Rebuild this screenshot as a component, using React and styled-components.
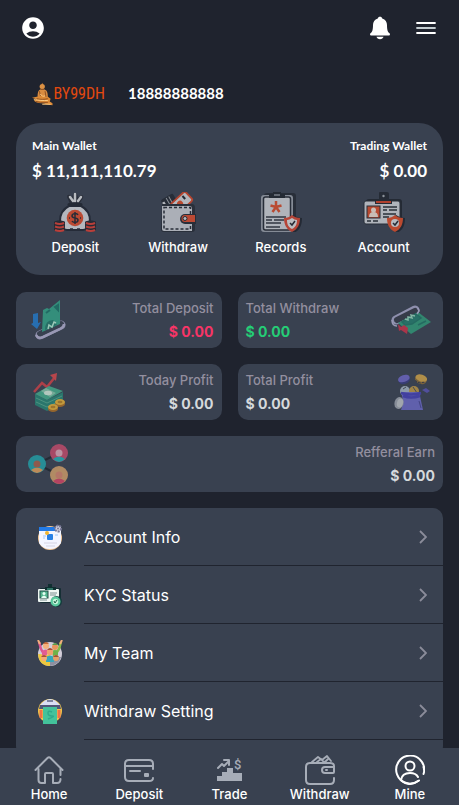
import React from 'react'
import styled, { createGlobalStyle } from 'styled-components'
import { MdAccountCircle } from 'react-icons/md'

const GlobalStyle = createGlobalStyle`
    :root {
        --page: #1f232e;
        --panel: #394150;
        --muted: #938f9f;
        --line: #20242f;
        --icon: #a7adb8;
    }

    * { box-sizing: border-box; }

    body {
        margin: 0;
        background-color: var(--page);
        color: #fff;
        font-family: Inter, 'Liberation Sans', sans-serif;
    }

    a { color: inherit; text-decoration: none; }
    button { border: 0; padding: 0; background: none; color: inherit; font: inherit; cursor: pointer; }
    svg { display: block; }
`

/* ---------- drawings ---------- */

const BellIcon = () => (
  <svg width="24" height="24" viewBox="0 0 24 24" fill="#fff" aria-hidden="true">
    <path d="M12 .7c-1.200 0-2 .7-2.200 1.700C6.500 3.300 5 6 5 9c0 5-.8 7.300-2.500 8.200C1.700 17.800 1.900 19.400 3 19.400h18c1.100 0 1.300-1.600.5-2.200C19.800 16.300 19 14 19 9c0-3-1.500-5.700-4.800-6.600C14 1.400 13.200.7 12 .7z" />
    <path d="M8.500 20.800h7c-.4 1.600-1.700 2.500-3.500 2.500s-3.100-.9-3.500-2.500z" />
  </svg>
)

const MenuIcon = () => (
  <svg width="24" height="24" viewBox="0 0 24 24" aria-hidden="true">
    <path d="M3 7h18M3 17h18" stroke="#fff" strokeWidth="1.800" strokeLinecap="round" />
    <path d="M3 12h18" stroke="#c3ccd0" strokeWidth="1.800" strokeLinecap="round" />
  </svg>
)

const BuddhaIcon = () => (
  <svg width="23" height="24" viewBox="0 0 23 24" aria-hidden="true">
    <path d="M6 15c0-5 1-7 3-8h4c3 1 4 3 4 9l1 2-6 2-8-1z" fill="#d98c40" />
    <path d="M0 16l5-1 6-1 6 1 3 2-1 3 3 2v2c-5 0-8-2-12-2-4 0-6-1-8-3l3-1z" fill="#dc8a36" />
    <path d="M10 2l1-2 1 2z" fill="#c57a32" />
    <circle cx="11" cy="4" r="2.800" fill="#dc9144" />
    <path d="M8 9l1 5M14 9l1 6M5 17c4 1 8 1 12 0M4 20l5 1 8 0" stroke="#8b4d20" strokeWidth="1" fill="none" />
    <path d="M9 12c1 2 3 3 5 2M2 18c5 1 10 1 15 1M11 23l9 0" stroke="#ffcf86" strokeWidth="1" fill="none" />
    <path d="M9 7h4" stroke="#8b4d20" strokeWidth="1" />
  </svg>
)

const BagIcon = () => (
  <svg width="42" height="40" viewBox="0 0 42 40" aria-hidden="true">
    <path d="M15 14h12c6 3 9 9 9 15 0 5-3 9-7 9H13c-4 0-7-4-7-9 0-6 3-12 9-15z" fill="#b4b7be" stroke="#252b38" strokeWidth="2" />
    <path d="M17 14L13 5q0-3 3-2l2 3 1-4q2-3 4 0l1 4 3-3q3 0 2 3l-5 8z" fill="#292e39" />
    <path d="M16 5l3 4M21 2v7M27 5l-3 4" stroke="#b9bcc1" strokeWidth="2.500" strokeLinecap="round" />
    <path d="M15 12.500h12" stroke="#242a35" strokeWidth="3" strokeLinecap="round" />
    <circle cx="21" cy="26" r="8.300" fill="#bb4a33" />
    <path d="M24 23c-1-2-6-2-6 1 0 3 6 1 6 4s-5 3-6 1M21 20v12" stroke="#272c37" strokeWidth="1.500" fill="none" />
    <path d="M15 26h1M26 26h1M16 37h3M23 37h3" stroke="#272c37" strokeWidth="1.500" />
    {[0, 31].map((x) => (
      <g key={x} transform={`translate(${x} 0)`}>
        <path d="M0 30c1-2 10-2 11 0v8c-2 2-9 2-11 0z" fill="#262b36" />
        <path d="M1 31q5 2 9 0M1 34.500q5 2 9 0M1 38q5 2 9 0" stroke="#b93f3a" strokeWidth="2" fill="none" />
      </g>
    ))}
  </svg>
)

const PurseIcon = () => (
  <svg width="38" height="40" viewBox="0 0 38 40" aria-hidden="true">
    <g transform="rotate(-30 10 9)">
      <rect x="3" y="4" width="14" height="15" rx="2" fill="#272d38" />
      <path d="M4.500 7v9" stroke="#b4b7bd" strokeWidth="2.500" />
      <path d="M9 5v10M12 5v10" stroke="#8b9098" strokeWidth="1" />
    </g>
    <g transform="rotate(47 24 9)">
      <rect x="18" y="1" width="12" height="20" rx="2" fill="#b4b7bd" stroke="#b5442f" strokeWidth="1.800" />
      <circle cx="24" cy="13" r="3" fill="#b9492f" />
      <path d="M20 6h4" stroke="#252a35" strokeWidth="2" />
    </g>
    <path d="M3 12h30q3 0 3 4v21q0 3-3 3H5q-3 0-3-3z" fill="#292f3a" />
    <path d="M3 14h28q2 0 2 3v22H5q-2 0-2-2z" fill="#abafb7" />
    <path d="M5 15.500h26.500v21.500H5z" fill="none" stroke="#282e39" strokeWidth="1.500" strokeDasharray="3 2" />
    <path d="M26 22h11v10H26a5 5 0 010-10z" fill="#282e39" />
    <path d="M26 23h10v7H26a3.500 3.500 0 010-7z" fill="#bb4933" />
    <circle cx="26" cy="26.500" r="2" fill="#b7babf" stroke="#272d38" />
  </svg>
)

const Shield = ({ x, y, color, inner }) => (
  <g transform={`translate(${x} ${y})`}>
    <path d="M1-8c3 2 6 3 9 3 0 7-2 12-8 15-4-2-8-6-8-12z" fill="#242a35" />
    <path d="M0-8c2 2 5 3 8 3 0 6-2 11-8 14-6-3-8-8-8-14 3 0 6-1 8-3z" fill={color} />
    <path d="M0-5c2 1 3 2 5 2 0 4-1 7-5 9-4-2-5-5-5-9 2 0 3-1 5-2z" fill={inner} />
    <path d="M-2 0l2 2 3-4" stroke="#252a35" strokeWidth="1.500" fill="none" />
  </g>
)

const RecordsIcon = () => (
  <svg width="42" height="40" viewBox="0 0 42 40" aria-hidden="true">
    <rect x="4" y="1" width="32" height="37" rx="3" fill="#282e39" />
    <rect x="1" y="3" width="32" height="37" rx="3" fill="#858b96" />
    <rect x="3.500" y="5" width="27" height="33" rx="2" fill="#b0b4bb" stroke="#282e39" strokeWidth="1.500" />
    <path d="M9 6V2h4V0h8v2h4v4z" fill="#242a34" />
    <path d="M14 3h6" stroke="#777e87" strokeWidth="1.500" />
    <path d="M16 9v6M10.500 13.500L16 15l5.500-1.500M12.500 20L16 15l3.500 5" stroke="#b94b32" strokeWidth="2.500" fill="none" />
    <path d="M6 25h20M6 28h6m2 0h10M6 31h15M6 35h14" stroke="#303641" strokeWidth="1.300" />
    <Shield x={32} y={31} color="#b64538" inner="#bcbec2" />
  </svg>
)

const BadgeIcon = () => (
  <svg width="42" height="40" viewBox="0 0 42 40" aria-hidden="true">
    <rect x="3" y="7" width="36" height="25" rx="3" fill="#242a34" />
    <rect x="1" y="9" width="36" height="23" rx="2" fill="#b0b4bb" stroke="#292f39" />
    <path d="M12 12V8h4V1q0-1 1-1h7q2 0 2 2v6h3v4z" fill="#252b35" />
    <path d="M13 10h15" stroke="#b1412f" strokeWidth="2" />
    <circle cx="20.500" cy="4" r="1.200" fill="#8c929b" />
    <rect x="4" y="14" width="13" height="12" fill="#b84a31" stroke="#292f39" />
    <circle cx="10.500" cy="18" r="2.500" fill="#c9bdb6" />
    <path d="M6 25q0-5 4.500-5t4.500 5z" fill="#c9bdb6" />
    <path d="M4 29h4m2 0h5M20 15h14M20 18h4m2 0h8M20 22h13M20 25h6" stroke="#292f39" strokeWidth="1.500" />
    <Shield x={32} y={31} color="#bb4a30" inner="#bb4a30" />
    <circle cx="32" cy="31" r="4" fill="#b8bbc0" />
    <path d="M30 31l2 2 3-4" stroke="#252a35" strokeWidth="1.500" fill="none" />
  </svg>
)

const TotalDepositIcon = () => (
  <svg width="40" height="40" viewBox="0 0 40 40" aria-hidden="true">
    <path d="M5 14l5-1v10l3-1-4 7-6-5 2-1z" fill="#276eb0" />
    <path d="M12 35L33 25" stroke="#8b8ca9" strokeWidth="9" strokeLinecap="round" />
    <path d="M12 34L33 24" stroke="#394150" strokeWidth="6" strokeLinecap="round" />
    <path d="M15 10l4-2 2 1 11-9v24L14 32z" fill="#348e7b" />
    <path d="M18 13l4-3M27 7l3-2v5z" stroke="#216a63" strokeWidth="2" fill="#28786e" />
    <path d="M17 30q0-10 8-10l4 5z" fill="#276f66" />
    <path d="M20 29l1-4 3 2 2-5 2 1" stroke="#9bc9b8" strokeWidth="1.500" fill="none" />
    <path d="M8 35q2 4 7 2l17-8q4-2 4-5" stroke="#9998b4" strokeWidth="2.500" fill="none" />
  </svg>
)

const TotalWithdrawIcon = () => (
  <svg width="40" height="40" viewBox="0 0 40 40" aria-hidden="true">
    <path d="M5 20L24 10" stroke="#8e8fad" strokeWidth="9" strokeLinecap="round" />
    <path d="M6 20L24 11" stroke="#363b49" strokeWidth="6" strokeLinecap="round" />
    <path d="M7 23l20-11 13 10-20 12z" fill="#32866f" />
    <path d="M11 22l14-8 5 4-9 6-7 1zM27 25l8-4" stroke="#256a61" strokeWidth="1.500" fill="#286f66" />
    <path d="M14 19l3 1 0-3 4 1-1-3 4 1" stroke="#83b5a4" strokeWidth="1.500" fill="none" />
    <path d="M1 20q0 6 5 6M27 8l1 3-2 3" stroke="#9999b5" strokeWidth="1.500" fill="none" />
    <path d="M7 24l1 7 2-1 6 4 1-6-4-3-3 2z" fill="#a9354a" />
  </svg>
)

const TodayProfitIcon = () => (
  <svg width="40" height="40" viewBox="0 0 40 40" aria-hidden="true">
    <path d="M6 20l8-9 5 4 8-10" stroke="#ad4149" strokeWidth="2.500" fill="none" />
    <path d="M22 3l7-2-1 8z" fill="#b8464b" />
    <path d="M7 22l12 6 16-8v11l-16 8-12-6z" fill="#2a766c" />
    <path d="M7 22l14-8 14 5-16 9z" fill="#42967f" />
    <path d="M13 19l5-3 10 5-6 4z" fill="#75aa98" />
    <ellipse cx="20" cy="21" rx="4" ry="2.200" fill="#b2c7bd" />
    <path d="M8 26l11 5 15-7M8 30l11 5 15-7" stroke="#4d9280" strokeWidth="1" fill="none" />
    {[[32, 30], [25, 35]].map(([x, y]) => (
      <g key={x}>
        <ellipse cx={x} cy={y + 2} rx="5" ry="3" fill="#95662d" />
        <ellipse cx={x} cy={y} rx="5" ry="3" fill="#c39a3c" />
        <ellipse cx={x} cy={y} rx="2.500" ry="1.300" fill="#9c752e" />
      </g>
    ))}
  </svg>
)

const TotalProfitIcon = () => (
  <svg width="40" height="40" viewBox="0 0 40 40" aria-hidden="true">
    <g transform="rotate(-18 13 7)">
      <ellipse cx="13" cy="8" rx="6" ry="4" fill="#383d75" />
      <ellipse cx="13" cy="6.500" rx="6" ry="3.500" fill="#625eab" />
    </g>
    <g transform="rotate(18 30 7)">
      <ellipse cx="30" cy="8" rx="6" ry="4" fill="#77623d" />
      <ellipse cx="30" cy="6" rx="6" ry="3.500" fill="#b08e49" />
      <path d="M25 10l2 1M28 11h3M32 10l2-1" stroke="#373c49" />
    </g>
    <circle cx="14" cy="19" r="5" fill="#8d9aaa" />
    <circle cx="23" cy="19" r="5" fill="#a08447" />
    <path d="M22 15l4 6M12 17l3-2" stroke="#464b54" />
    <path d="M10 20h20l-1 4 3 14H10q3-8 1-14z" fill="#6060ac" />
    <path d="M10 21q10 3 20 0M12 24q8 3 17 0" stroke="#4240a0" strokeWidth="2.500" fill="none" />
    <path d="M28 29l2 7" stroke="#434584" />
    <ellipse cx="8" cy="31" rx="4.500" ry="6" fill="#878d98" transform="rotate(15 8 31)" />
    <ellipse cx="9" cy="31" rx="3" ry="4.500" fill="#a1a6ad" transform="rotate(15 9 31)" />
    <path d="M31 18l4-2 4 3-3 2z" fill="#514f9c" />
  </svg>
)

const ReferralIcon = () => (
  <svg width="40" height="40" viewBox="0 0 40 40" aria-hidden="true">
    <path d="M31 9L9 20l22 11" stroke="#242b35" strokeWidth="2" fill="none" />
    <circle cx="9" cy="20" r="9" fill="#278d96" />
    <circle cx="31" cy="9" r="9" fill="#a84966" />
    <circle cx="31" cy="31" r="9" fill="#b18b64" />
    <path d="M3 26q6-5 12 0-6 6-12 0z" fill="#bd8b59" />
    <circle cx="9" cy="20" r="3.500" fill="#8f5a4d" />
    <path d="M25 15q6-5 12 0-6 6-12 0z" fill="#2898a0" />
    <circle cx="31" cy="9" r="3.500" fill="#bc92a2" />
    <path d="M25 37q6-5 12 0-6 6-12 0z" fill="#b44362" />
    <circle cx="31" cy="31" r="3.500" fill="#b47767" />
  </svg>
)

const AccountInfoIcon = () => (
  <svg width="26" height="26" viewBox="0 0 26 26" aria-hidden="true">
    <circle cx="13" cy="14" r="12" fill="#f4c898" />
    <path d="M2 6h22v13q-4 6-11 6T2 19z" fill="#f3f5ff" />
    <path d="M2 3h20v4H2z" fill="#237be6" />
    <path d="M6 12h3M18 11h3M6 14h2" stroke="#9cc7fa" />
    <rect x="10" y="10" width="6" height="6" rx="1" fill="#267fe5" />
    <circle cx="10" cy="9" r="2" fill="#f0b632" />
    <path d="M7 19h13M9 22h9" stroke="#d5d3e2" strokeWidth="1" />
    <circle cx="21" cy="4.500" r="3" fill="#d0d0de" stroke="#777795" strokeWidth="2" strokeDasharray="2 1" />
    <circle cx="21" cy="4.500" r="1" fill="#777795" />
  </svg>
)

const KycIcon = () => (
  <svg width="26" height="26" viewBox="0 0 26 26" aria-hidden="true">
    <rect x="3" y="6" width="21" height="15" rx="1" fill="#172f35" />
    <rect x="1" y="7" width="21" height="13" rx="1" fill="#eef6f2" />
    <path d="M8 8V5h3V2h4v3h4v3z" fill="#102f31" />
    <path d="M10 7h6" stroke="#51b998" />
    <rect x="3" y="9" width="8" height="7" fill="#53b58e" stroke="#214d47" />
    <circle cx="7" cy="11.500" r="1.500" fill="#e6fff3" />
    <path d="M4 16q3-5 6 0z" fill="#e6fff3" />
    <path d="M3 18h7M13 11h7M13 13h6" stroke="#7f9092" />
    <circle cx="19.500" cy="19.500" r="5.500" fill="#143b3c" />
    <circle cx="18.500" cy="19.500" r="5" fill="#5ac99d" />
    <circle cx="18.500" cy="19.500" r="2.700" fill="#c5f4da" />
    <path d="M17 19l1 2 2-3" stroke="#206149" fill="none" />
  </svg>
)

const TeamIcon = () => (
  <svg width="26" height="26" viewBox="0 0 26 26" aria-hidden="true">
    <circle cx="13" cy="14" r="12" fill="#d2cdd9" />
    <path d="M1 14q1 12 12 12V15z" fill="#edc83d" />
    <path d="M13 17h11q-2 8-11 9z" fill="#8d8fa0" />
    <path d="M2 2l2 7 4 7" stroke="#dc5592" strokeWidth="2.500" fill="none" />
    <path d="M24 2l-2 7-4 6" stroke="#85b946" strokeWidth="2.500" fill="none" />
    <path d="M1 0l2 4M25 0l-2 4" stroke="#f2ae7c" strokeWidth="2" />
    <circle cx="9" cy="6" r="3" fill="#f3b17c" />
    <path d="M6 4q3-4 6 0z" fill="#c96c3a" />
    <circle cx="18" cy="7" r="3" fill="#e8955c" />
    <path d="M15 5q3-4 6 0z" fill="#5c9a49" />
    <path d="M5 11q4-3 7 0l-3 5H5z" fill="#e25c93" />
    <path d="M15 11q3-2 6 0v6h-5z" fill="#6eb249" />
    <circle cx="13" cy="12" r="3.200" fill="#f0a26f" />
    <path d="M10 10q3-4 6 0z" fill="#a94c32" />
    <path d="M9 17q4-3 8 0v5H9z" fill="#37a7ba" />
    <circle cx="7" cy="18" r="3" fill="#f5ab76" />
    <circle cx="19" cy="18" r="3" fill="#e6a069" />
    <path d="M4 17q3-4 6 0zM16 17q3-4 6 0z" fill="#a65338" />
  </svg>
)

const WithdrawSettingIcon = () => (
  <svg width="26" height="26" viewBox="0 0 26 26" aria-hidden="true">
    <circle cx="13" cy="13" r="12" fill="#f1c64a" />
    <path d="M3 7Q13-5 23 7v3H3z" fill="#d9dff4" />
    <path d="M10 3h6" stroke="#5e6684" strokeWidth="1.500" />
    <path d="M3 7h20l1 4H2z" fill="#515778" />
    <path d="M4 12v8M22 12v8" stroke="#ef7048" strokeWidth="3" />
    <path d="M6 9h14v17H6z" fill="#43c29b" />
    <path d="M15 14q-4-2-4 1t4 3-4 3" stroke="#2fa98b" strokeWidth="1.500" fill="none" />
  </svg>
)

const ChevronIcon = () => (
  <svg width="8" height="14" viewBox="0 0 8 14" fill="none" aria-hidden="true">
    <path d="M1 1l6 6-6 6" stroke="#8b8c9a" strokeWidth="1.800" />
  </svg>
)

const HomeIcon = () => (
  <>
    <path d="M1.500 15L13.500 3q1.500-1.500 3 0l12 12" />
    <path d="M4.500 14v11q0 3 3 3H11v-9q0-1 1-1h6q1 0 1 1v9h4q3.500 0 3.500-4M26.500 14v6" />
  </>
)

const CardIcon = () => (
  <>
    <path d="M29 14V9q0-4-4-4H5Q1 5 1 9v13q0 4 4 4h20q4 0 4-3M1 11h28M6 16h10" />
    <rect x="21" y="19" width="3" height="2" />
  </>
)

const TradeIcon = () => (
  <>
    <path d="M3 26v-5h5v-4h5v-4h6v5h9v8z" fill="currentColor" stroke="none" />
    <path d="M4 13l4-4 2 2 5-5M10 5h5v5" strokeWidth="2" />
    <text x="20" y="14" fontFamily="Roboto" fontSize="13" fill="currentColor" stroke="none">$</text>
  </>
)

const WalletIcon = () => (
  <>
    <path d="M29 12v-1q0-3-4-3H5Q1 8 1 12v13q0 4 4 4h20q4 0 4-4v-2" />
    <path d="M28 12h-8q-3 0-3 3t3 3h8q1 0 1-1v-4q0-1-1-1zM21 15h1" />
    <path d="M7 7l6-5 4 3 5-4 4 5M12 7l4-3 3 3M20 7l3-3" strokeWidth="1.800" />
  </>
)

const MineIcon = () => (
  <>
    <path d="M28.500 19A14 14 0 1 0 24 25.500M29 15q0-2-.5-3" />
    <circle cx="15" cy="11" r="4.500" />
    <path d="M6 25q1-7 9-7 6 0 8 4M7 26q7 6 16 0" />
  </>
)

/* ---------- data ---------- */

const actions = [
  { label: 'Deposit', icon: <BagIcon /> },
  { label: 'Withdraw', icon: <PurseIcon /> },
  { label: 'Records', icon: <RecordsIcon /> },
  { label: 'Account', icon: <BadgeIcon /> },
]

const stats = [
  { label: 'Total Deposit', icon: <TotalDepositIcon />, color: '#f73567' },
  { label: 'Total Withdraw', icon: <TotalWithdrawIcon />, color: '#25cd76', flip: true },
  { label: 'Today Profit', icon: <TodayProfitIcon /> },
  { label: 'Total Profit', icon: <TotalProfitIcon />, flip: true },
  { label: 'Refferal Earn', icon: <ReferralIcon />, wide: true },
]

const settings = [
  { label: 'Account Info', icon: <AccountInfoIcon /> },
  { label: 'KYC Status', icon: <KycIcon /> },
  { label: 'My Team', icon: <TeamIcon /> },
  { label: 'Withdraw Setting', icon: <WithdrawSettingIcon /> },
]

const tabs = [
  { label: 'Home', icon: <HomeIcon /> },
  { label: 'Deposit', icon: <CardIcon /> },
  { label: 'Trade', icon: <TradeIcon /> },
  { label: 'Withdraw', icon: <WalletIcon /> },
  { label: 'Mine', icon: <MineIcon />, active: true },
]

const App = () => {
  return (
    <Screen>
      <GlobalStyle />
      <Content>
        <Header>
          <button type="button" aria-label="Profile"><MdAccountCircle size={26} /></button>
          <HeaderActions>
            <button type="button" aria-label="Notifications"><BellIcon /></button>
            <button type="button" aria-label="Menu"><MenuIcon /></button>
          </HeaderActions>
        </Header>

        <Profile>
          <Brand><BuddhaIcon /><BrandName>BY99DH</BrandName></Brand>
          <Phone>18888888888</Phone>
        </Profile>

        <WalletCard>
          <Balances>
            <Balance>
              <BalanceLabel>Main Wallet</BalanceLabel>
              <BalanceValue>$ 11,111,110.79</BalanceValue>
            </Balance>
            <Balance $right>
              <BalanceLabel>Trading Wallet</BalanceLabel>
              <BalanceValue>$ 0.00</BalanceValue>
            </Balance>
          </Balances>
          <Actions>
            {actions.map(({ label, icon }) => (
              <Action href="#" key={label}>{icon}{label}</Action>
            ))}
          </Actions>
        </WalletCard>

        <Stats>
          {stats.map(({ label, icon, color, flip, wide }) => (
            <Stat key={label} $flip={flip} $wide={wide}>
              {icon}
              <StatText $flip={flip}>
                <StatLabel>{label}</StatLabel>
                <StatValue $color={color}>$ 0.00</StatValue>
              </StatText>
            </Stat>
          ))}
        </Stats>

        <Settings>
          {settings.map(({ label, icon }) => (
            <Setting href="#" key={label}>
              <SettingIcon>{icon}</SettingIcon>
              <SettingLabel>{label}<ChevronIcon /></SettingLabel>
            </Setting>
          ))}
        </Settings>
      </Content>

      <TabBar>
        {tabs.map(({ label, icon, active }) => (
          <Tab href="#" key={label}>
            <TabIcon viewBox="0 0 30 30" $active={active} aria-hidden="true">{icon}</TabIcon>
            {label}
          </Tab>
        ))}
      </TabBar>
    </Screen>
  )
}

export default App

const Screen = styled.div`
    display: flex;
    flex-direction: column;
    height: 100vh;
`

const Content = styled.main`
    flex: 1;
    min-height: 0;
    padding: 0 16px;
    overflow-y: auto;
    scrollbar-width: none;
`

const Header = styled.header`
    display: flex;
    justify-content: space-between;
    align-items: center;
    height: 56px;
    padding: 0 5px 0 4px;
`

const HeaderActions = styled.div`
    display: flex;
    gap: 22px;
`

const Profile = styled.section`
    display: flex;
    align-items: center;
    gap: 23px;
    height: 67px;
    padding: 8px 16px 0;
`

const Brand = styled.div`
    display: flex;
    align-items: center;
    width: 73px;
`

const BrandName = styled.span`
    color: #e4490f;
    font-family: 'Liberation Sans Narrow', 'Roboto Condensed', Roboto, sans-serif;
    font-size: 16px;
    line-height: 24px;
`

const Phone = styled.span`
    padding-bottom: 2px;
    font-family: Lato, sans-serif;
    font-size: 15px;
    font-weight: 700;
    line-height: 24px;
`

const WalletCard = styled.section`
    padding: 14px 8px 18px;
    border-radius: 24px;
    background-color: var(--panel);
`

const Balances = styled.div`
    display: flex;
    justify-content: space-between;
    padding: 0 8px;
`

const Balance = styled.div`
    display: flex;
    flex-direction: column;
    text-align: ${({ $right }) => ($right ? 'right' : 'left')};
    font-family: Lato, sans-serif;
    font-weight: 700;
`

const BalanceLabel = styled.span`
    font-size: 12px;
    line-height: 18px;
`

const BalanceValue = styled.span`
    font-size: 17px;
    line-height: 32px;
`

const Actions = styled.nav`
    display: grid;
    grid-template-columns: repeat(4, 1fr);
    padding-top: 5px;
`

const Action = styled.a`
    display: flex;
    flex-direction: column;
    align-items: center;
    gap: 5px;
    font-size: 13px;
    font-weight: 500;
    line-height: 20px;
`

const Stats = styled.section`
    display: grid;
    grid-template-columns: 1fr 1fr;
    gap: 16px;
    margin: 17px 0 16px;
`

const Stat = styled.div`
    display: flex;
    flex-direction: ${({ $flip }) => ($flip ? 'row-reverse' : 'row')};
    justify-content: space-between;
    align-items: center;
    grid-column: ${({ $wide }) => ($wide ? '1 / -1' : 'auto')};
    height: 56px;
    padding: ${({ $flip }) => ($flip ? '0 12px 0 8px' : '0 8px 0 12px')};
    border-radius: 10px;
    background-color: var(--panel);
`

const StatText = styled.div`
    display: flex;
    flex-direction: column;
    text-align: ${({ $flip }) => ($flip ? 'left' : 'right')};
`

const StatLabel = styled.span`
    color: var(--muted);
    font-size: 13px;
    font-weight: 500;
    line-height: 24px;
`

const StatValue = styled.span`
    color: ${({ $color }) => $color || '#d5d9dc'};
    font-size: 14px;
    font-weight: 700;
    line-height: 24px;
`

const Settings = styled.nav`
    padding-bottom: 16px;
    border-radius: 10px;
    background-color: var(--panel);
`

const Setting = styled.a`
    display: flex;
    height: 58px;
`

const SettingIcon = styled.span`
    display: flex;
    justify-content: center;
    align-items: center;
    width: 68px;
`

const SettingLabel = styled.span`
    flex: 1;
    display: flex;
    justify-content: space-between;
    align-items: center;
    padding-right: 16px;
    border-bottom: 1px solid var(--line);
    font-size: 16px;
    font-weight: 400;
`

const TabBar = styled.nav`
    display: grid;
    grid-template-columns: repeat(5, 1fr);
    padding: 7px 4px 2px;
    background-color: var(--panel);
`

const Tab = styled.a`
    display: flex;
    flex-direction: column;
    align-items: center;
    font-size: 13px;
    font-weight: 500;
    line-height: 18px;
`

const TabIcon = styled.svg`
    width: 30px;
    height: 30px;
    color: ${({ $active }) => ($active ? '#fff' : 'var(--icon)')};
    fill: none;
    stroke: currentColor;
    stroke-width: 2;
    stroke-linecap: round;
    stroke-linejoin: round;
`
